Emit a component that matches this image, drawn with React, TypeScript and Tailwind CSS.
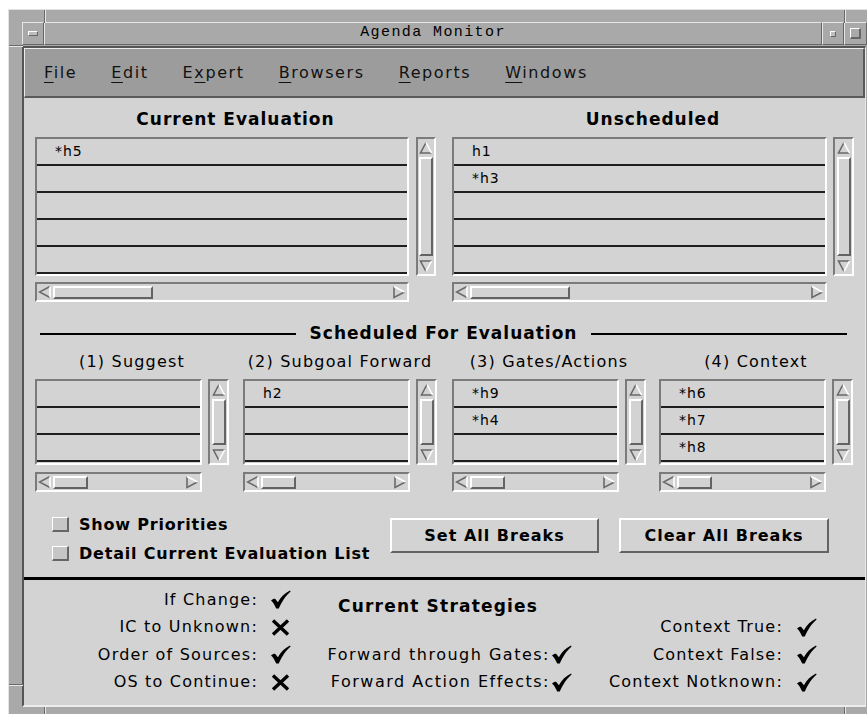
import React from 'react'

const sunken = 'border-2 border-t-[#7b7b7b] border-l-[#7b7b7b] border-r-white border-b-white'
const raised = 'border-2 border-t-white border-l-white border-r-[#636363] border-b-[#636363]'
const sans = "font-['DejaVu_Sans',sans-serif]"

const arrowPaths = {
  up: { dark: 'M7 1.5 L1.5 12 L12.5 12', light: 'M7 1.5 L12.5 12' },
  down: { dark: 'M12.5 2 L1.5 2 L7 12.5', light: 'M12.5 2 L7 12.5' },
  left: { dark: 'M12 1.5 L1.5 7 L12 12.5', light: 'M12 1.5 L12 12.5' },
  right: { dark: 'M2 1.5 L2 12.5 L12.5 7', light: 'M2 1.5 L12.5 7' },
}

function Arrow({ dir }: { dir: 'up' | 'down' | 'left' | 'right' }) {
  const p = arrowPaths[dir]
  return (
    <svg width="14" height="14" viewBox="0 0 14 14">
      <path d={p.dark} fill="none" stroke="#6a6a6a" strokeWidth="1.6" />
      <path d={p.light} fill="none" stroke="#ffffff" strokeWidth="1.6" />
    </svg>
  )
}

function Check() {
  return (
    <svg width="21" height="19" viewBox="0 0 21 19">
      <path d="M1 10.5 C2.8 9 4.2 8.4 5.3 8.9 L7.9 12.3 C10.8 7 14.8 3 20 0.5 L20.6 1.6 C15.6 6 12.2 11 8.8 18.6 L6.2 18.6 C4.8 15.2 3.2 12.4 1 10.5 Z" fill="#000" />
    </svg>
  )
}

function Cross() {
  return (
    <svg width="21" height="17" viewBox="0 0 21 17">
      <path d="M3 1.5 L18 15.5 M18 1.5 L3 15.5" stroke="#000" strokeWidth="3.4" />
    </svg>
  )
}

function VScroll({ className }: { className: string }) {
  return (
    <div className={`${sunken} flex flex-col items-center ${className}`}>
      <div className="h-[17px] flex items-center justify-center">
        <Arrow dir="up" />
      </div>
      <div className={`${raised} flex-1 w-[14px] my-[1px]`} />
      <div className="h-[17px] flex items-center justify-center">
        <Arrow dir="down" />
      </div>
    </div>
  )
}

function HScroll({ className, thumb }: { className: string; thumb: string }) {
  return (
    <div className={`${sunken} h-[20px] flex items-center ${className}`}>
      <div className="w-[16px] flex justify-center">
        <Arrow dir="left" />
      </div>
      <div className={`${raised} h-[13px] ${thumb}`} />
      <div className="flex-1" />
      <div className="w-[16px] flex justify-center">
        <Arrow dir="right" />
      </div>
    </div>
  )
}

function ListBox({ items, rows, className }: { items: string[]; rows: number; className: string }) {
  return (
    <div className={`${sunken} ${className}`}>
      {Array.from({ length: rows }, (_, i) => (
        <div key={i} className={`h-[27px] border-b-2 border-b-[#1e1e1e] flex items-center pl-[18px] text-[14px] tracking-[1px] text-black ${sans}`}>
          {items[i] ?? ''}
        </div>
      ))}
    </div>
  )
}

const scheduled = [
  { title: '(1) Suggest', items: [] as string[], ml: '' },
  { title: '(2) Subgoal Forward', items: ['h2'], ml: 'ml-[14px]' },
  { title: '(3) Gates/Actions', items: ['*h9', '*h4'], ml: 'ml-[15px]' },
  { title: '(4) Context', items: ['*h6', '*h7', '*h8'], ml: 'ml-[13px]' },
]

const menus = [
  { key: 'F', rest: 'ile' },
  { key: 'E', rest: 'dit' },
  { pre: 'E', key: 'x', rest: 'pert' },
  { key: 'B', rest: 'rowsers' },
  { key: 'R', rest: 'eports' },
  { key: 'W', rest: 'indows' },
]

function Strategy({ label, on, gap }: { label: string; on: boolean; gap: string }) {
  return (
    <div className="h-[27.5px] flex items-center justify-end">
      <span>{label}</span>
      <span className={`w-[21px] flex justify-center ${gap}`}>{on ? <Check /> : <Cross />}</span>
    </div>
  )
}

export default function App() {
  return (
    <div className="w-[867px] h-[714px] overflow-hidden bg-white pt-[9px] pl-[8px]">
      {/* window frame */}
      <div className="relative w-[880px] h-[720px] bg-[#a9a9a9] border-t border-l border-t-[#e2e2e2] border-l-[#e2e2e2] pt-[12px] pl-[13px]">
        {/* resize corner marks */}
        <div className="absolute left-[35px] top-0 w-[2px] h-[13px] border-l border-l-[#6a6a6a] border-r border-r-[#e6e6e6]" />
        <div className="absolute left-[835px] top-0 w-[2px] h-[13px] border-l border-l-[#6a6a6a] border-r border-r-[#e6e6e6]" />
        <div className="absolute left-0 top-[35px] w-[14px] h-[2px] border-t border-t-[#6a6a6a] border-b border-b-[#e6e6e6]" />
        <div className="absolute left-0 top-[674px] w-[14px] h-[2px] border-t border-t-[#6a6a6a] border-b border-b-[#e6e6e6]" />
        <div className="absolute left-[35px] top-[697px] w-[2px] h-[20px] border-l border-l-[#6a6a6a] border-r border-r-[#e6e6e6]" />
        <div className="absolute left-[835px] top-[697px] w-[2px] h-[20px] border-l border-l-[#6a6a6a] border-r border-r-[#e6e6e6]" />

        {/* title bar */}
        <div className="flex h-[23px] w-[845px]">
          <div className="w-[22px] border-t border-l border-t-[#e6e6e6] border-l-[#e6e6e6] border-b border-r border-b-[#666] border-r-[#666] flex items-center justify-center">
            <div className="w-[10px] h-[5px] border-t border-l border-t-white border-l-white border-b border-r border-b-[#666] border-r-[#666] bg-[#bdbdbd]" />
          </div>
          <div className="flex-1 border-t border-l border-t-[#e6e6e6] border-l-[#e6e6e6] border-b border-r border-b-[#666] border-r-[#666] flex items-center justify-center text-[15px] tracking-[1.4px] text-black font-['Liberation_Mono',monospace]">
            Agenda Monitor
          </div>
          <div className="w-[22px] border-t border-l border-t-[#e6e6e6] border-l-[#e6e6e6] border-b border-r border-b-[#666] border-r-[#666] flex items-center justify-center">
            <div className="w-[6px] h-[6px] border-t border-l border-t-white border-l-white border-b border-r border-b-[#666] border-r-[#666] bg-[#bdbdbd]" />
          </div>
          <div className="w-[23px] border-t border-l border-t-[#e6e6e6] border-l-[#e6e6e6] border-b border-r border-b-[#666] border-r-[#666] flex items-center justify-center">
            <div className="w-[11px] h-[11px] border-t border-l border-t-white border-l-white border-b-2 border-r-2 border-b-[#666] border-r-[#666]" />
          </div>
        </div>

        {/* client area */}
        <div className="mt-[1px] w-[844px] border-l-2 border-t-2 border-r border-b-2 border-l-[#555] border-t-[#555] border-r-[#e8e8e8] border-b-[#ececec]">
          {/* menu bar */}
          <div className={`h-[50px] bg-[#9c9c9c] border-t border-l border-t-[#ececec] border-l-[#ececec] border-b-2 border-r-2 border-b-[#5a5a5a] border-r-[#5a5a5a] flex items-center gap-[34px] pl-[19px] text-[16px] tracking-[1.6px] text-[#111] ${sans}`}>
            {menus.map((m) => (
              <span key={m.key + m.rest}>
                {m.pre}
                <span className="underline underline-offset-[4px] decoration-1">{m.key}</span>
                {m.rest}
              </span>
            ))}
          </div>

          {/* content */}
          <div className={`h-[607px] bg-[#d3d3d3] text-black ${sans}`}>
            <div className="pl-[11px] pt-[12px]">
              {/* current evaluation / unscheduled */}
              <div className="flex">
                <div className="w-[401px]">
                  <div className="h-[18px] leading-[18px] mb-[9px] text-center font-bold text-[17px] tracking-[1px]">Current Evaluation</div>
                  <div className="flex gap-[7px]">
                    <ListBox items={['*h5']} rows={5} className="w-[374px] h-[139px]" />
                    <VScroll className="w-[20px] h-[139px]" />
                  </div>
                  <HScroll className="w-[374px] mt-[6px]" thumb="w-[100px]" />
                </div>
                <div className="w-[402px] ml-[16px]">
                  <div className="h-[18px] leading-[18px] mb-[9px] text-center font-bold text-[17px] tracking-[1px]">Unscheduled</div>
                  <div className="flex gap-[6px]">
                    <ListBox items={['h1', '*h3']} rows={5} className="w-[375px] h-[139px]" />
                    <VScroll className="w-[21px] h-[139px]" />
                  </div>
                  <HScroll className="w-[375px] mt-[6px]" thumb="w-[100px]" />
                </div>
              </div>

              {/* scheduled for evaluation */}
              <div className="flex items-center ml-[5px] w-[807px] gap-[14px] mt-[22px] h-[20px]">
                <div className="flex-1 h-[2px] bg-black" />
                <div className="font-bold text-[17px] tracking-[1px]">Scheduled For Evaluation</div>
                <div className="flex-1 h-[2px] bg-black" />
              </div>
              <div className="flex mt-[9px]">
                {scheduled.map((s) => (
                  <div key={s.title} className={`w-[194px] ${s.ml}`}>
                    <div className="h-[18px] leading-[18px] mb-[8px] text-center text-[16px] tracking-[1.2px]">{s.title}</div>
                    <div className="flex gap-[6px]">
                      <ListBox items={s.items} rows={3} className="w-[167px] h-[86px]" />
                      <VScroll className="w-[21px] h-[86px]" />
                    </div>
                    <HScroll className="w-[167px] mt-[7px]" thumb="w-[35px]" />
                  </div>
                ))}
              </div>

              {/* options + breaks */}
              <div className="flex mt-[18px]">
                <div className="w-[355px] pl-[17px] font-bold text-[16px] tracking-[0.8px]">
                  <div className="h-[29px] flex items-center gap-[10px]">
                    <div className="w-[17px] h-[15px] bg-[#c6c6c6] border-t border-l border-t-white border-l-white border-b-2 border-r-2 border-b-[#666] border-r-[#666]" />
                    <span>Show Priorities</span>
                  </div>
                  <div className="h-[29px] flex items-center gap-[10px]">
                    <div className="w-[17px] h-[15px] bg-[#c6c6c6] border-t border-l border-t-white border-l-white border-b-2 border-r-2 border-b-[#666] border-r-[#666]" />
                    <span>Detail Current Evaluation List</span>
                  </div>
                </div>
                <button className={`${raised} w-[209px] h-[35px] mt-[8px] bg-[#d3d3d3] font-bold text-[16px] tracking-[1px]`}>Set All Breaks</button>
                <button className={`${raised} w-[210px] h-[35px] mt-[8px] ml-[20px] bg-[#d3d3d3] font-bold text-[16px] tracking-[1px]`}>Clear All Breaks</button>
              </div>
            </div>

            <div className="mt-[9px] h-[3px] bg-black" />

            {/* current strategies */}
            <div className="flex pt-[6px] text-[16px] tracking-[1.2px]">
              <div className="w-[267px]">
                <Strategy label="If Change:" on gap="ml-[12px]" />
                <Strategy label="IC to Unknown:" on={false} gap="ml-[12px]" />
                <Strategy label="Order of Sources:" on gap="ml-[12px]" />
                <Strategy label="OS to Continue:" on={false} gap="ml-[12px]" />
              </div>
              <div className="w-[281px] tracking-[1.5px]">
                <div className="h-[55px] pt-[11px] pl-[47px] leading-[18px] font-bold text-[17px] tracking-[1.2px]">Current Strategies</div>
                <Strategy label="Forward through Gates:" on gap="ml-[1px]" />
                <Strategy label="Forward Action Effects:" on gap="ml-[1px]" />
              </div>
              <div className="flex-1 pr-[48px]">
                <div className="h-[27.5px]" />
                <Strategy label="Context True:" on gap="ml-[13px]" />
                <Strategy label="Context False:" on gap="ml-[13px]" />
                <Strategy label="Context Notknown:" on gap="ml-[13px]" />
              </div>
            </div>
          </div>
        </div>
      </div>
    </div>
  )
}
